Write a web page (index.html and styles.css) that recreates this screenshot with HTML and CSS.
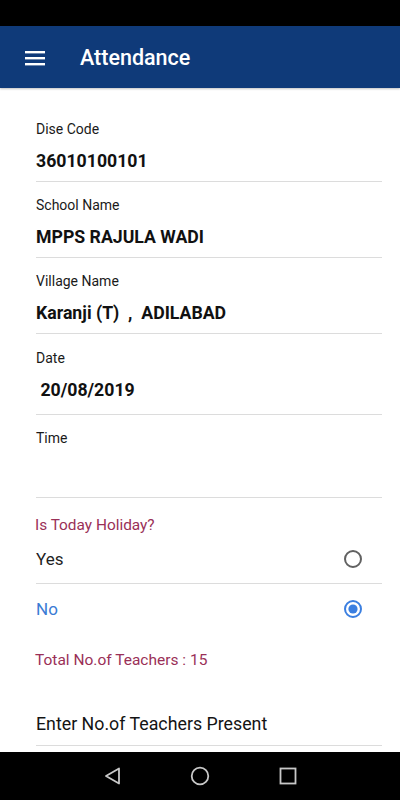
FILE: index.html
```html
<!DOCTYPE html>
<html>
<head>
<meta charset="utf-8">
<link rel="stylesheet" href="styles.css">
</head>
<body>
<div class="status"></div>
<header class="appbar">
  <svg class="menu" width="20" height="16" viewBox="0 0 20 16"><rect x="0" y="1" width="20" height="2.4" fill="#fff"/><rect x="0" y="7" width="20" height="2.4" fill="#fff"/><rect x="0" y="13" width="20" height="2.4" fill="#fff"/></svg>
  <h1 class="title">Attendance</h1>
</header>
<main class="content">
  <div class="field">
    <div class="label">Dise Code</div>
    <div class="value">36010100101</div>
  </div>
  <div class="field">
    <div class="label">School Name</div>
    <div class="value">MPPS RAJULA WADI</div>
  </div>
  <div class="field">
    <div class="label">Village Name</div>
    <div class="value">Karanji (T)&nbsp; ,&nbsp; ADILABAD</div>
  </div>
  <div class="field field-date">
    <div class="label">Date</div>
    <div class="value">&nbsp;20/08/2019</div>
  </div>
  <div class="field field-time">
    <div class="label">Time</div>
    <div class="value"></div>
  </div>
  <div class="question">Is Today Holiday?</div>
  <div class="option option-yes">
    <span>Yes</span>
    <svg class="radio" width="20" height="20" viewBox="0 0 20 20"><circle cx="10" cy="10" r="8" fill="none" stroke="#616161" stroke-width="2"/></svg>
  </div>
  <div class="option option-no">
    <span>No</span>
    <svg class="radio" width="20" height="20" viewBox="0 0 20 20"><circle cx="10" cy="10" r="8" fill="none" stroke="#3b7fe0" stroke-width="2"/><circle cx="10" cy="10" r="4.6" fill="#3b7fe0"/></svg>
  </div>
  <div class="total">Total No.of Teachers : 15</div>
  <div class="enter">Enter No.of Teachers Present</div>
</main>
<nav class="navbar">
  <svg width="20" height="20" viewBox="0 0 20 20"><path d="M17 2.5 L4 10 L17 17.5 Z" fill="none" stroke="#c8c8c8" stroke-width="1.8" stroke-linejoin="round"/></svg>
  <svg width="20" height="20" viewBox="0 0 20 20"><circle cx="10" cy="10" r="8.3" fill="none" stroke="#c8c8c8" stroke-width="1.8"/></svg>
  <svg width="20" height="20" viewBox="0 0 20 20"><rect x="2.5" y="2.5" width="15" height="15" fill="none" stroke="#c8c8c8" stroke-width="1.8"/></svg>
</nav>
</body>
</html>
```
FILE: styles.css
```css
* { box-sizing: border-box; }
html, body {
  margin: 0;
  padding: 0;
  background: #fff;
  font-family: Roboto, "Noto Sans", sans-serif;
  width: 400px;
  height: 800px;
  overflow: hidden;
}
.status {
  height: 26px;
  background: #000;
}
.appbar {
  height: 62px;
  background: #0f3a79;
  display: flex;
  align-items: center;
  padding-left: 25px;
  padding-top: 2px;
  box-shadow: 0 1px 2px rgba(0,0,0,0.25);
  position: relative;
  z-index: 1;
}
.menu { display: block; }
.title {
  margin: 0 0 0 35px;
  font-size: 21.5px;
  font-weight: 500;
  color: #fff;
  line-height: 24px;
}
.content {
  padding: 18px 18px 0 36px;
}
.field {
  border-bottom: 1px solid #dcdcdc;
  padding-top: 13px;
  padding-bottom: 8px;
}
.label {
  font-size: 14px;
  line-height: 20px;
  color: #1a1a1a;
}
.value {
  margin-top: 10px;
  font-size: 17.7px;
  line-height: 24px;
  height: 24px;
  font-weight: 700;
  color: #111;
}
.field-date { padding-top: 14px; padding-bottom: 12px; }
.field-time { padding-bottom: 15px; }
.question {
  margin-top: 17px;
  margin-left: -1px;
  font-size: 15.4px;
  line-height: 20px;
  color: #9a3057;
}
.option {
  display: flex;
  align-items: center;
  justify-content: space-between;
  font-size: 17px;
}
.option-yes {
  height: 49px;
  border-bottom: 1px solid #dcdcdc;
  color: #1f1f1f;
}
.option-no {
  height: 50px;
  color: #3b7bd4;
}
.radio { margin-right: 19px; display: block; }
.total {
  margin-top: 16px;
  margin-left: -1px;
  font-size: 15.5px;
  line-height: 20px;
  color: #9a3057;
}
.enter {
  padding-top: 42px;
  padding-bottom: 9px;
  font-size: 17.8px;
  line-height: 24px;
  color: #141414;
  border-bottom: 1px solid #dcdcdc;
}
.navbar {
  position: absolute;
  left: 0;
  top: 752px;
  width: 400px;
  height: 48px;
  background: #000;
  display: flex;
  align-items: center;
  justify-content: center;
  gap: 68px;
}
.navbar svg { display: block; }
```
